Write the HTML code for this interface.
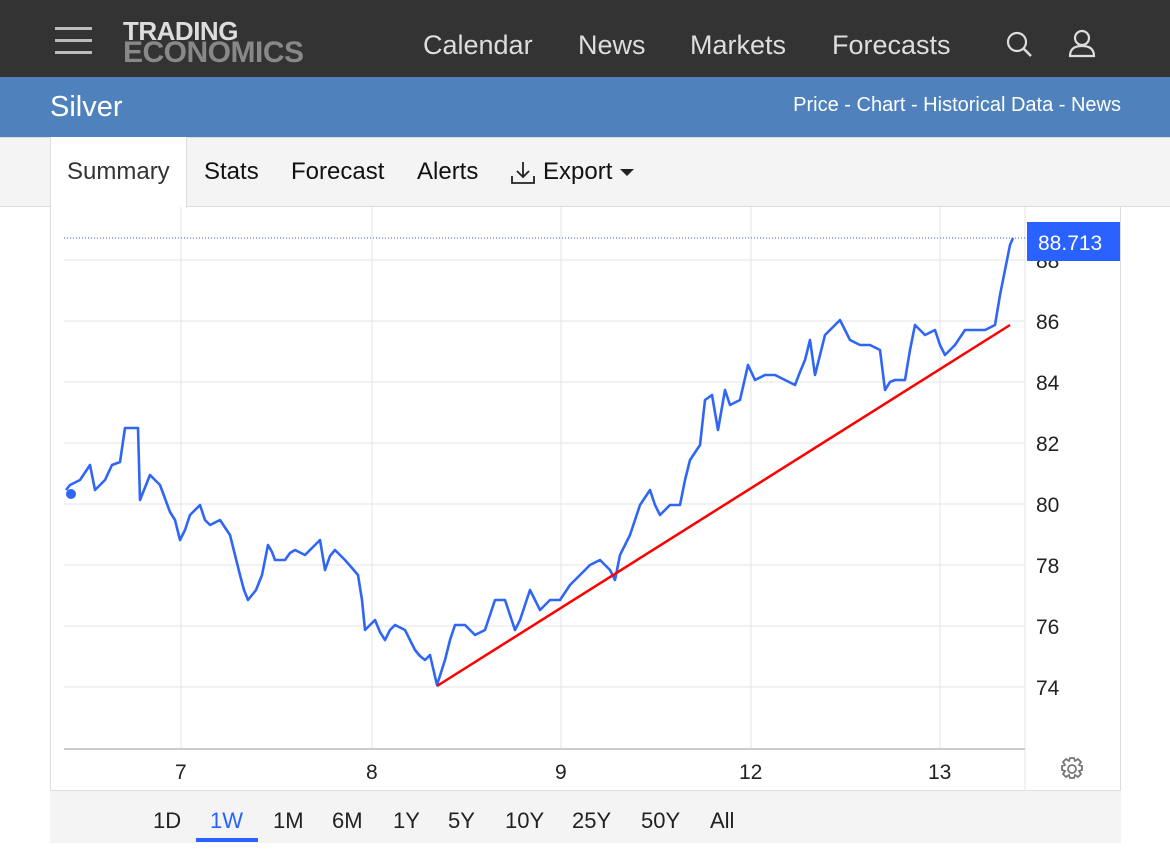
<!DOCTYPE html>
<html><head><meta charset="utf-8"><style>
*{margin:0;padding:0;box-sizing:border-box}
body{width:1170px;height:864px;background:#fff;font-family:"Liberation Sans",Arial,sans-serif;position:relative;overflow:hidden}
.top{position:absolute;left:0;top:0;width:1170px;height:77px;background:#333}
.burger span{position:absolute;left:55px;width:37px;height:3px;background:#bbb}
.logo{position:absolute;left:123px;font-weight:bold;letter-spacing:-0.5px}
.nav{position:absolute;top:30px;color:#ddd;font-size:27px}
.blue{position:absolute;left:0;top:77px;width:1170px;height:60px;background:#4f81bd}
.tabs{position:absolute;left:0;top:137px;width:1170px;height:70px;background:#f4f4f4;border-top:1px solid #ddd;border-bottom:1px solid #ddd}
.tab{position:absolute;top:20px;font-size:24px;color:#111}
.panel{position:absolute;left:50px;top:206px;width:1071px;height:637px;border:1px solid #ddd;border-top:none;border-radius:0 0 4px 4px}
.bot{position:absolute;left:50px;top:790px;width:1071px;height:53px;background:#f4f4f4;border-top:1px solid #e0e0e0}
.r{position:absolute;top:808px;font-size:22px;color:#222}
</style></head><body>
<div class="top">
<div class="burger"><span style="top:27px"></span><span style="top:39px"></span><span style="top:51px"></span></div>
<div class="logo" style="top:18px;font-size:26px;color:#ddd;line-height:26px">TRADING</div>
<div class="logo" style="top:40px;font-size:30px;color:#888;line-height:26px">ECONOMICS</div>
<div class="nav" style="left:423px">Calendar</div>
<div class="nav" style="left:578px">News</div>
<div class="nav" style="left:690px">Markets</div>
<div class="nav" style="left:832px">Forecasts</div>
<svg style="position:absolute;left:1005px;top:30px" width="30" height="30"><circle cx="12" cy="12" r="9" fill="none" stroke="#ddd" stroke-width="2.2"/><line x1="18.5" y1="18.5" x2="26" y2="26" stroke="#ddd" stroke-width="2.5"/></svg>
<svg style="position:absolute;left:1068px;top:29px" width="30" height="30"><circle cx="14" cy="9" r="7" fill="none" stroke="#ddd" stroke-width="2.2"/><path d="M2 27 Q2 17 14 17 Q26 17 26 27 Z" fill="none" stroke="#ddd" stroke-width="2.2"/></svg>
</div>
<div class="blue"><div style="position:absolute;left:50px;top:14px;font-size:29px;color:#fff">Silver</div>
<div style="position:absolute;right:49px;top:17px;font-size:20px;color:#fff">Price - Chart - Historical Data - News</div></div>
<div class="tabs">
<div style="position:absolute;left:50px;top:-1px;width:137px;height:71px;background:#fff;border-left:1px solid #ddd;border-right:1px solid #ddd"></div>
<div class="tab" style="left:67px;color:#333">Summary</div>
<div class="tab" style="left:204px">Stats</div>
<div class="tab" style="left:291px">Forecast</div>
<div class="tab" style="left:417px">Alerts</div>
<svg style="position:absolute;left:510px;top:22px" width="28" height="26"><path d="M13 2 V17 M7 11 L13 17 L19 11" fill="none" stroke="#222" stroke-width="1.8"/><path d="M2 16 V23 H24 V16" fill="none" stroke="#222" stroke-width="1.8"/></svg>
<div class="tab" style="left:543px">Export</div>
<svg style="position:absolute;left:620px;top:31px" width="14" height="8"><path d="M0 0 H14 L7 7Z" fill="#222"/></svg>
</div>
<div class="panel"></div>
<svg style="position:absolute;left:0;top:0" width="1170" height="864">
<g stroke="#e6e6e6" stroke-width="1">
<line x1="64" y1="260" x2="1025" y2="260"/><line x1="64" y1="321" x2="1025" y2="321"/><line x1="64" y1="382" x2="1025" y2="382"/><line x1="64" y1="443" x2="1025" y2="443"/><line x1="64" y1="504" x2="1025" y2="504"/><line x1="64" y1="565" x2="1025" y2="565"/><line x1="64" y1="626" x2="1025" y2="626"/><line x1="64" y1="687" x2="1025" y2="687"/>
<line x1="181" y1="207" x2="181" y2="749"/><line x1="372" y1="207" x2="372" y2="749"/><line x1="561" y1="207" x2="561" y2="749"/><line x1="751" y1="207" x2="751" y2="749"/><line x1="940" y1="207" x2="940" y2="749"/>
<line x1="1025" y1="207" x2="1025" y2="790"/>
</g>
<line x1="64" y1="749" x2="1025" y2="749" stroke="#ccc" stroke-width="2"/>
<line x1="64" y1="238" x2="1025" y2="238" stroke="#2962ff" stroke-width="1" stroke-dasharray="1,2"/>
<polyline fill="none" stroke="#2f66f5" stroke-width="2.6" stroke-linejoin="round" points="66,490 70,485 80,480 90,465 95,490 105,480 112,465 120,462 125,428 138,428 140,500 150,475 160,485 170,512 175,520 180,540 185,530 190,515 200,505 205,520 210,525 220,520 230,535 235,555 240,575 244,590 248,600 252,595 256,590 262,575 268,545 272,552 275,560 285,560 290,553 295,550 305,555 315,545 320,540 325,570 330,556 335,550 345,560 352,568 358,575 362,600 365,630 370,625 375,620 380,632 385,640 390,630 395,625 405,630 410,640 415,650 420,656 425,660 430,655 437,685 445,660 450,640 455,625 465,625 475,635 485,630 490,615 495,600 505,600 510,615 515,630 520,620 525,605 530,590 535,600 540,610 550,600 560,600 570,585 580,575 590,565 600,560 610,570 615,580 620,555 625,545 630,535 635,520 640,505 650,490 655,505 660,515 670,505 680,505 685,480 690,460 700,445 705,400 712,395 718,430 725,390 730,405 740,400 748,365 755,380 765,375 775,375 785,380 795,385 800,372 805,360 810,340 815,375 820,355 825,335 840,320 845,330 850,340 860,345 870,345 880,350 885,390 890,382 895,380 905,380 910,350 915,325 925,335 935,330 940,345 945,355 955,345 965,330 975,330 985,330 995,325 1000,295 1005,270 1010,245 1013,238"/>
<circle cx="71" cy="494" r="5" fill="#2f66f5"/>
<line x1="437" y1="686" x2="1010" y2="325" stroke="#f00" stroke-width="2.5"/>
<g font-size="21" fill="#222" font-family="Liberation Sans,sans-serif">
<text x="1036" y="268">88</text><text x="1036" y="329">86</text><text x="1036" y="390">84</text><text x="1036" y="451">82</text><text x="1036" y="512">80</text><text x="1036" y="573">78</text><text x="1036" y="634">76</text><text x="1036" y="695">74</text>
<text x="175" y="779">7</text><text x="366" y="779">8</text><text x="555" y="779">9</text><text x="739" y="779">12</text><text x="928" y="779">13</text>
</g>
<rect x="1027" y="222" width="93" height="39" fill="#2962ff"/>
<text x="1038" y="250" font-size="21" fill="#fff" font-family="Liberation Sans,sans-serif">88.713</text>
<g transform="translate(1072,769)" fill="none" stroke="#777" stroke-width="1.8"><circle r="4"/><path d="M-2,-11 h4 l1,3 3,-2 3,3 -2,3 3,1 v4 l-3,1 2,3 -3,3 -3,-2 -1,3 h-4 l-1,-3 -3,2 -3,-3 2,-3 -3,-1 v-4 l3,-1 -2,-3 3,-3 3,2z"/></g>
</svg>
<div class="bot"></div>
<div class="r" style="left:153px">1D</div>
<div class="r" style="left:210px;color:#2962ff">1W</div>
<div style="position:absolute;left:196px;top:838px;width:62px;height:4px;background:#2962ff"></div>
<div class="r" style="left:273px">1M</div>
<div class="r" style="left:332px">6M</div>
<div class="r" style="left:393px">1Y</div>
<div class="r" style="left:448px">5Y</div>
<div class="r" style="left:505px">10Y</div>
<div class="r" style="left:572px">25Y</div>
<div class="r" style="left:641px">50Y</div>
<div class="r" style="left:710px">All</div>
</body></html>
